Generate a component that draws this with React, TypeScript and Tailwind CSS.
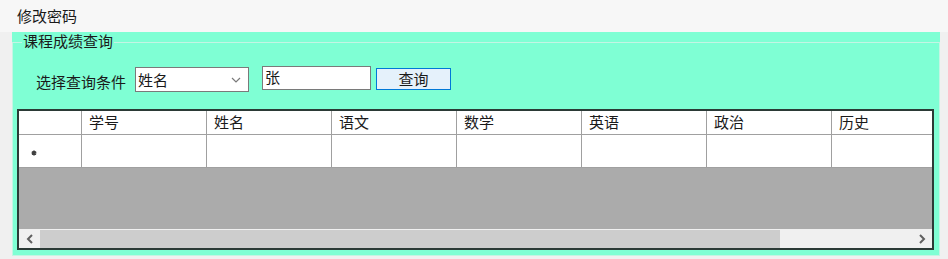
const columns = ["学号", "姓名", "语文", "数学", "英语", "政治", "历史"];

const font = { fontFamily: '"Noto Sans CJK SC", "Noto Sans", sans-serif' };

function Chevron({ dir }: { dir: "left" | "right" }) {
  return (
    <svg width="8" height="10" viewBox="0 0 8 10" className="text-[#606060]">
      {dir === "left" ? (
        <polyline points="6,1 2,5 6,9" fill="none" stroke="currentColor" strokeWidth="2" />
      ) : (
        <polyline points="2,1 6,5 2,9" fill="none" stroke="currentColor" strokeWidth="2" />
      )}
    </svg>
  );
}

export default function App() {
  return (
    <div
      className="w-[948px] h-[259px] overflow-hidden bg-[#f0f0f0] text-[15px] leading-[18px] text-[#1a1a1a]"
      style={font}
    >
      <div className="h-[32px] bg-[#f7f7f7] pl-[17px] pt-[7px]">修改密码</div>

      <div className="flex">
        <div className="w-[12px] shrink-0" />
        <div className="w-[928px] h-[224px] bg-[#7fffd4]">
          <div className="relative mt-[10px] h-[214px] border border-[#c4f5e4]">
            <div className="absolute -top-[11px] left-[9px] bg-[#7fffd4] px-[1px] leading-[18px]">
              课程成绩查询
            </div>

            <div className="flex items-start pt-[23px]">
              <div className="ml-[23px] mt-[7px] w-[98px]">选择查询条件</div>
              <div className="ml-[1px] mt-[1px] flex h-[25px] w-[114px] items-center justify-between border border-[#7a7a7a] bg-white pl-[2px] pr-[7px]">
                <span>姓名</span>
                <svg width="10" height="6" viewBox="0 0 10 6">
                  <polyline points="1,1 5,5 9,1" fill="none" stroke="#7a7a7a" strokeWidth="1.2" />
                </svg>
              </div>
              <div className="ml-[13px] h-[24px] w-[109px] border border-[#7a7a7a] bg-white pl-[2px] pt-[1px]">
                张
              </div>
              <button className="ml-[5px] mt-[2px] h-[22px] w-[75px] border border-[#0078d7] bg-[#e5f1fb] text-[15px] leading-[18px]">
                查询
              </button>
            </div>

            <div className="ml-[4px] mt-[17px] w-[917px] border-2 border-[#2b3a36]">
              <div className="flex h-[24px] border-b border-[#a0a0a0] bg-white">
                <div className="w-[63px] shrink-0 border-r border-[#a0a0a0]" />
                {columns.map((c) => (
                  <div
                    key={c}
                    className="w-[125px] shrink-0 border-r border-[#a0a0a0] pl-[7px] pt-[2px]"
                  >
                    {c}
                  </div>
                ))}
              </div>
              <div className="flex h-[33px] border-b border-[#a0a0a0] bg-white">
                <div className="flex w-[63px] shrink-0 items-center border-r border-[#a0a0a0] pl-[12px] pt-[4px]">
                  <svg width="6" height="6" viewBox="0 0 6 6">
                    <path d="M3 0.5V5.5M0.8 1.7L5.2 4.3M0.8 4.3L5.2 1.7" stroke="#404040" strokeWidth="1.6" />
                    <circle cx="3" cy="3" r="1.6" fill="#404040" />
                  </svg>
                </div>
                {columns.map((c) => (
                  <div key={c} className="w-[125px] shrink-0 border-r border-[#a0a0a0]" />
                ))}
              </div>
              <div className="h-[61px] bg-[#ababab]" />
              <div className="flex h-[19px] border-t border-[#f0f0f0] bg-[#f0f0f0]">
                <div className="flex w-[21px] shrink-0 items-center justify-center">
                  <Chevron dir="left" />
                </div>
                <div className="w-[740px] shrink-0 bg-[#cdcdcd]" />
                <div className="flex-1" />
                <div className="flex w-[21px] shrink-0 items-center justify-center">
                  <Chevron dir="right" />
                </div>
              </div>
            </div>
          </div>
        </div>
      </div>
    </div>
  );
}
